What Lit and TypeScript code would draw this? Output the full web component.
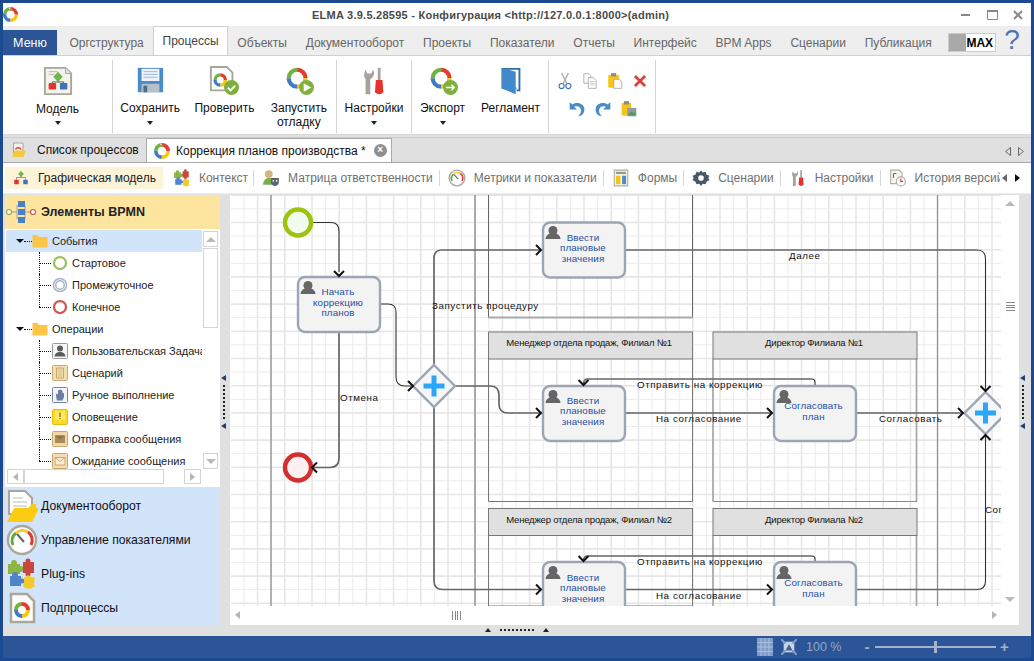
import { LitElement, html, svg, css } from 'lit';
import { customElement } from 'lit/decorators.js';

const RED = '#e53b2e';
const GREEN = '#6fb23f';
const BLUE = '#3f7cc4';
const YELLOW = '#f6c614';

// four coloured arcs, the ELMA ring
const ringArcs = (cx: number, cy: number, r: number, w: number) => svg`
  <g fill="none" stroke-width=${w} transform="rotate(-90 ${cx} ${cy})">
    <circle cx=${cx} cy=${cy} r=${r} pathLength="100" stroke=${RED} stroke-dasharray="25 75"></circle>
    <circle cx=${cx} cy=${cy} r=${r} pathLength="100" stroke=${YELLOW} stroke-dasharray="25 75" stroke-dashoffset="-25"></circle>
    <circle cx=${cx} cy=${cy} r=${r} pathLength="100" stroke=${BLUE} stroke-dasharray="25 75" stroke-dashoffset="-50"></circle>
    <circle cx=${cx} cy=${cy} r=${r} pathLength="100" stroke=${GREEN} stroke-dasharray="25 75" stroke-dashoffset="-75"></circle>
  </g>`;

const icon = (size: number, body: unknown, box = 32) =>
  html`<svg width=${size} height=${size} viewBox="0 0 ${box} ${box}">${body}</svg>`;

const puzzle = svg`
  <g fill="#8db544"><rect x="2" y="6" width="12" height="10"></rect><circle cx="8" cy="5" r="3"></circle><circle cx="15" cy="11" r="3"></circle></g>
  <g fill="#c8473c"><rect x="17" y="4" width="11" height="11"></rect><circle cx="22" cy="3" r="2.500"></circle><circle cx="22" cy="16" r="2.500"></circle></g>
  <g fill="#4f85c8"><rect x="4" y="18" width="11" height="10"></rect><circle cx="9" cy="17" r="3"></circle><circle cx="16" cy="23" r="2.500"></circle></g>
  <path d="M18 20l4-3 3 2 4 1-1 5 1 3-5 3-7-2 1-4z" fill="#f4c92a"></path>`;

const gauge = svg`
  <circle cx="16" cy="16" r="14" fill="#fff" stroke="#aaa69b" stroke-width="2.400"></circle>
  <path d="M7 21A10 10 0 0 1 10 9" fill="none" stroke="#5fa83c" stroke-width="3"></path>
  <path d="M10 9A10 10 0 0 1 22 8" fill="none" stroke="#f4c92a" stroke-width="3"></path>
  <path d="M22 8A10 10 0 0 1 25 21" fill="none" stroke="#dc3a30" stroke-width="3"></path>
  <path d="M11 10L18 18" stroke="#666" stroke-width="2"></path>`;

const flow = svg`
  <path d="M16 10V15M8 19V15H24V19" fill="none" stroke="#555"></path>
  <path d="M16 3L21 9L16 14L11 9Z" fill="#6fb84a"></path>
  <rect x="4" y="19" width="8" height="8" rx="1" fill="#e5332a"></rect>
  <rect x="20" y="19" width="8" height="8" rx="1" fill="#3f74b8"></rect>`;

const ICONS: Record<string, unknown> = {
  model: svg`
    <path d="M2 2H24L30 8V30H2Z" fill="#f4f2ec" stroke="#a8a59c" stroke-width="2"></path>
    <path d="M24 2V8H30" fill="#e4e2da" stroke="#a8a59c"></path>
    <path d="M6 6h10M6 9h6" stroke="#bbb"></path>
    <path d="M16 12V17M10 22V17H22V22" fill="none" stroke="#555"></path>
    <path d="M16 6L21 11.500L16 17L11 11.500Z" fill="#6fb84a"></path>
    <rect x="6" y="18" width="8" height="7" rx="1" fill="#e5332a"></rect>
    <rect x="18" y="18" width="8" height="7" rx="1" fill="#3f74b8"></rect>`,
  save: svg`
    <rect x="3" y="2" width="27" height="26" fill="#4a8cc9"></rect>
    <rect x="7" y="3" width="19" height="13" fill="#eef3f8"></rect>
    <path d="M9 6h15M9 9h15M9 12h15" stroke="#9db8d4"></path>
    <rect x="7" y="19" width="19" height="9" fill="#b9bfc6"></rect><rect x="9" y="21" width="4" height="7" fill="#4d6c8d"></rect>`,
  check: svg`
    <path d="M2 1H19L25 7V26H2Z" fill="#fff" stroke="#a8a59c" stroke-width="2"></path>
    ${ringArcs(12, 15, 5.500, 3.500)}
    <circle cx="24" cy="23" r="8" fill="#7fb03f"></circle>
    <path d="M20 23l3 3 5-5" fill="none" stroke="#fff" stroke-width="2"></path>`,
  run: svg`
    ${ringArcs(14, 13, 9, 4.500)}
    <circle cx="24" cy="23" r="8" fill="#7fb03f"></circle><path d="M21 18.500L29 23L21 27.500Z" fill="#fff"></path>`,
  tools: svg`
    <path d="M7 14V30H12V14C16 12 17 8 15 4L13 8H9L7 4C5 8 5 12 7 14Z" fill="#a7a29a"></path>
    <rect x="20" y="2" width="3" height="13" fill="#a7a29a"></rect>
    <path d="M18 15H25L26 28Q21.500 32 17 28Z" fill="#e5332a"></path>`,
  export: svg`
    ${ringArcs(14, 13, 9, 4.500)}
    <circle cx="24" cy="23" r="8" fill="#7fb03f"></circle><path d="M19 23H28M25 20l3 3-3 3" fill="none" stroke="#fff" stroke-width="1.500"></path>`,
  book: svg`
    <path d="M6 2H26V27H22V24H6Z" fill="#2b6ea8"></path><path d="M8 4H24V25H22V23H8Z" fill="#fff"></path>
    <path d="M6 2L21 6V30L6 24Z" fill="#4189c9"></path>`,
  cut: svg`
    <path d="M10 2L19 20M22 2L13 20" stroke="#a8adb3" stroke-width="2.400"></path>
    <circle cx="10" cy="25" r="4.500" fill="none" stroke="#3f74b8" stroke-width="2"></circle>
    <circle cx="22" cy="25" r="4.500" fill="none" stroke="#3f74b8" stroke-width="2"></circle>`,
  copy: svg`
    <path d="M5 3H14L17 6V20H5Z" fill="#fff" stroke="#a5a5a5" stroke-width="1.500"></path>
    <path d="M13 10H22L27 15V29H13Z" fill="#fff" stroke="#a5a5a5" stroke-width="1.500"></path>
    <path d="M16 17h8M16 20h8M16 23h8" stroke="#a5a5a5"></path>`,
  paste: svg`
    <rect x="4" y="5" width="19" height="23" rx="2" fill="#f6c614"></rect><rect x="9" y="2" width="9" height="6" fill="#8c8c84"></rect>
    <path d="M14 13H24L28 17V29H14Z" fill="#fff" stroke="#a5a5a5" stroke-width="1.500"></path>`,
  del: svg`<path d="M7 7L25 25M25 7L7 25" stroke="#d8433a" stroke-width="5"></path>`,
  undo: svg`
    <path d="M3 4V17H16L11 12C16 10 23 12 23 19C23 23 21 26 18 29C26 28 30 22 29 15C28 7 17 2 8 8Z" fill="#4a8cc9"></path>`,
  redo: svg`
    <path d="M29 4V17H16L21 12C16 10 9 12 9 19C9 23 11 26 14 29C6 28 2 22 3 15C4 7 15 2 24 8Z" fill="#4a8cc9"></path>`,
  pasteSpecial: svg`
    <rect x="3" y="5" width="17" height="23" rx="2" fill="#f6c614"></rect><rect x="7" y="2" width="9" height="6" fill="#8c8c84"></rect>
    <rect x="13" y="14" width="16" height="15" fill="#8f9aa3"></rect><path d="M15 26l5-6 3 3 4-2v6H15z" fill="#4f9a58"></path>`,
  flow: svg`${flow}`,
  puzzle: svg`${puzzle}`,
  mask: svg`
    <circle cx="12" cy="9" r="7" fill="#d4b483"></circle><path d="M2 28C2 19 8 16 12 16C17 16 21 19 21 28Z" fill="#79b04a"></path>
    <path d="M16 16H30V24C30 28 26 30 23 30C20 30 16 28 16 24Z" fill="#5c6570"></path>
    <circle cx="20" cy="21" r="1.500" fill="#fff"></circle><circle cx="26" cy="21" r="1.500" fill="#fff"></circle>`,
  gauge: svg`${gauge}`,
  form: svg`
    <path d="M4 2H28V30H4Z" fill="#f5f3ea" stroke="#b0ad9f" stroke-width="2"></path>
    <rect x="7" y="5" width="18" height="4" fill="#9a9a92"></rect>
    <rect x="7" y="12" width="8" height="15" fill="#f6c614"></rect><rect x="18" y="12" width="7" height="15" fill="#4a8cc9"></rect>`,
  gear: svg`
    <path d="M16 2l3 4 5-1 2 5 5 2-2 4 2 4-5 2-2 5-5-1-3 4-3-4-5 1-2-5-5-2 2-4-2-4 5-2 2-5 5 1z" fill="#47586b"></path>
    <circle cx="16" cy="16" r="5" fill="#fff"></circle>`,
  history: svg`
    <path d="M3 2H18L23 7V26H3Z" fill="#f8f7f2" stroke="#b0ad9f" stroke-width="2"></path>
    <path d="M8 8v8M8 8h5" stroke="#dc3a30" stroke-width="2" fill="none"></path>
    <circle cx="21" cy="22" r="8" fill="#fff" stroke="#aaa" stroke-width="2"></circle>
    <path d="M21 17v5h4" fill="none" stroke="#dc3a30" stroke-width="2"></path>`,
  procList: svg`
    <path d="M5 2H24V22H5Z" fill="#f2f0ea" stroke="#a8a59c" stroke-width="2"></path>
    <path d="M9 15A6 6 0 0 1 20 15" fill="none" stroke="#d8433a" stroke-width="3"></path>
    <path d="M2 30L7 17H30L25 30Z" fill="#f6c83c"></path>`,
  ring: svg`${ringArcs(16, 16, 11, 6.500)}`,
  docFolder: svg`
    <path d="M3 1H19L26 8V24H3Z" fill="#fff" stroke="#aaa69b" stroke-width="2"></path>
    <path d="M7 8h10M7 12h14M7 16h14" stroke="#bbb"></path>
    <path d="M1 32L8 18H22L26 14H30V18H33L26 32Z" fill="#fbcc13"></path>`,
  plugins: svg`${puzzle}`,
  subProc: svg`
    <path d="M5 2H21L28 9V30H5Z" fill="#fff" stroke="#aaa69b" stroke-width="2.500"></path>
    ${ringArcs(16, 18, 6, 4)}`,
  folder: svg`<path d="M1 8V4H11L14 8H31V29H1Z" fill="#fbc644"></path>`,
  evStart: svg`<circle cx="16" cy="16" r="12" fill="#fff" stroke="#9cc066" stroke-width="4.500"></circle>`,
  evMid: svg`<circle cx="16" cy="16" r="13" fill="#fff" stroke="#a9b3c4" stroke-width="3"></circle><circle cx="16" cy="16" r="8.500" fill="#fff" stroke="#a9b3c4" stroke-width="3"></circle>`,
  evEnd: svg`<circle cx="16" cy="16" r="12" fill="#fff" stroke="#cf5650" stroke-width="4.500"></circle>`,
  opUser: svg`<rect x="1" y="1" width="30" height="30" rx="2" fill="#f6f6f6" stroke="#9a9a9a" stroke-width="2"></rect>
    <circle cx="16" cy="11" r="6" fill="#5b5b5b"></circle><path d="M5 27C6 20 11 18 16 18C21 18 26 20 27 27Z" fill="#5b5b5b"></path>`,
  opScript: svg`<rect x="1" y="1" width="30" height="30" rx="2" fill="#f3dfae" stroke="#c9ab75" stroke-width="2"></rect>
    <path d="M9 6H23V26H9Z" fill="none" stroke="#b7955c" stroke-width="1.500"></path><path d="M12 10h8M12 14h8M12 18h8M12 22h8" stroke="#b7955c"></path>`,
  opHand: svg`<rect x="1" y="1" width="30" height="30" rx="2" fill="#f4f4f6" stroke="#7686a5" stroke-width="2"></rect>
    <path d="M10 27C8 20 7 15 9 13L12 15V7L15 6L16 5L19 6L21 8V12L24 12V20L21 27Z" fill="#6b7ea6"></path>`,
  opAlert: svg`<rect x="1" y="1" width="30" height="30" rx="2" fill="#f8dc23" stroke="#e6bd1a" stroke-width="2"></rect>
    <path d="M6 5H26V21H20L15 27V21H6Z" fill="#fbe96b"></path><path d="M16 7V16M16 18V20.500" stroke="#a97d13" stroke-width="3"></path>`,
  opSend: svg`<rect x="1" y="1" width="30" height="30" rx="2" fill="#f0d8a8" stroke="#c9a870" stroke-width="2"></rect>
    <path d="M6 9H26V24H6Z" fill="#a98a5b"></path><path d="M6 9L16 17L26 9" fill="#8f7249"></path>`,
  opWait: svg`<rect x="1" y="1" width="30" height="30" rx="2" fill="#f3deb4" stroke="#c9a870" stroke-width="2"></rect>
    <path d="M6 9H26V24H6Z" fill="#f8ecd0" stroke="#b5965f" stroke-width="1.500"></path><path d="M6 9L16 17L26 9" fill="none" stroke="#b5965f" stroke-width="1.500"></path>`,
};

const MAIN_TABS = ['Оргструктура', 'Процессы', 'Объекты', 'Документооборот', 'Проекты', 'Показатели', 'Отчеты', 'Интерфейс', 'BPM Apps', 'Сценарии', 'Публикация'];

const SUB_TABS = [
  ['flow', 'Графическая модель'],
  ['puzzle', 'Контекст'],
  ['mask', 'Матрица ответственности'],
  ['gauge', 'Метрики и показатели'],
  ['form', 'Формы'],
  ['gear', 'Сценарии'],
  ['tools', 'Настройки'],
  ['history', 'История версий'],
];

const TREE = [
  { name: 'События', items: [['evStart', 'Стартовое'], ['evMid', 'Промежуточное'], ['evEnd', 'Конечное']] },
  { name: 'Операции', items: [['opUser', 'Пользовательская Задача'], ['opScript', 'Сценарий'], ['opHand', 'Ручное выполнение'], ['opAlert', 'Оповещение'], ['opSend', 'Отправка сообщения'], ['opWait', 'Ожидание сообщения']] },
];

const ACCORDION = [
  ['docFolder', 'Документооборот'],
  ['gauge', 'Управление показателями'],
  ['plugins', 'Plug-ins'],
  ['subProc', 'Подпроцессы'],
];

const range = (from: number, to: number, step: number) => {
  const out: number[] = [];
  for (let v = from; v <= to; v += step) out.push(v);
  return out;
};

const person = (x: number, y: number) => svg`
  <circle cx=${x} cy=${y + 4.500} r="4.500" fill="#666"></circle>
  <path d="M${x - 7.500} ${y + 13}C${x - 7} ${y + 8} ${x - 3} ${y + 7} ${x} ${y + 7}C${x + 3} ${y + 7} ${x + 7} ${y + 8} ${x + 7.500} ${y + 13}Z" fill="#666"></path>`;

const task = (x: number, y: number, lines: string[], baselines: number[], cx: number, px: number, py: number) => svg`
  <rect class="task" x=${x} y=${y} width="82" height="55" rx="7"></rect>
  ${person(px, py)}
  ${lines.map((l, i) => svg`<text class="task-text" x=${cx} y=${baselines[i]} text-anchor="middle">${l}</text>`)}`;

const gateway = (x: number, y: number) => svg`
  <path class="gate" d="M${x} ${y - 21}L${x + 21} ${y}L${x} ${y + 21}L${x - 21} ${y}Z"></path>
  <path d="M${x - 10.500} ${y}H${x + 10.500}M${x} ${y - 10.500}V${y + 10.500}" stroke="#2aa7fb" stroke-width="5"></path>`;

const arrow = (x: number, y: number, dir: 'r' | 'l' | 'd' | 'u') => {
  const d = {
    r: `M${x - 5} ${y - 5}L${x} ${y}L${x - 5} ${y + 5}`,
    l: `M${x + 5} ${y - 5}L${x} ${y}L${x + 5} ${y + 5}`,
    d: `M${x - 5} ${y - 5}L${x} ${y}L${x + 5} ${y - 5}`,
    u: `M${x - 5} ${y + 5}L${x} ${y}L${x + 5} ${y + 5}`,
  }[dir];
  return svg`<path class="head" d=${d}></path>`;
};

const label = (x: number, y: number, t: string) => svg`<text class="flow-label" x=${x} y=${y}>${t}</text>`;

@customElement('app-root')
export class AppRoot extends LitElement {
  static styles = css`
    :host {
      display: block;
      width: 1034px;
      height: 661px;
      font-family: 'Liberation Sans', Arial, sans-serif;
      font-size: 12px;
      color: #111;
      overflow: hidden;
    }
    svg { display: block; flex: none; }
    .window {
      box-sizing: border-box;
      width: 1034px;
      height: 661px;
      border: 3px solid #1b4a90;
      background: #e0e0e0;
      display: flex;
      flex-direction: column;
    }
    .title {
      height: 23px;
      background: #fff;
      display: flex;
      align-items: center;
      flex: none;
    }
    .logo { margin-left: -1px; }
    .title-text {
      margin-left: 293px;
      font-size: 11px;
      font-weight: bold;
      letter-spacing: .25px;
      color: #4a4a4a;
      white-space: nowrap;
    }
    .win-btns { margin-left: auto; display: flex; gap: 10px; padding-right: 5px; }

    .tabs {
      height: 30px;
      background: #eee;
      border-bottom: 1px solid #d0d0d0;
      box-sizing: border-box;
      display: flex;
      align-items: flex-end;
      flex: none;
    }
    .menu {
      width: 54px;
      height: 25px;
      background: #2b5597;
      color: #fff;
      font-size: 12.500px;
      display: flex;
      align-items: center;
      justify-content: center;
      margin-right: 3px;
      flex: none;
    }
    .tab {
      height: 25px;
      padding: 0 9.400px;
      color: #666;
      display: flex;
      align-items: center;
      white-space: nowrap;
      flex: none;
    }
    .tab.on {
      height: 29px;
      box-sizing: border-box;
      background: #fff;
      color: #444;
      border: 1px solid #d0d0d0;
      border-bottom: none;
      padding: 0 8.400px;
    }
    .max {
      margin-left: 7px;
      margin-bottom: 3px;
      width: 48px;
      height: 19px;
      box-sizing: border-box;
      border: 1px solid #ccc;
      background: linear-gradient(90deg, #a9a9a9 0 17px, #fff 17px);
      font-size: 12px;
      font-weight: bold;
      color: #000;
      text-align: right;
      padding-right: 2px;
      line-height: 19px;
      flex: none;
    }
    .help {
      margin-left: 5px;
      width: 22px;
      flex: none;
      text-align: center;
      font-size: 28px;
      line-height: 30px;
      color: #4a76b5;
    }

    .ribbon {
      height: 79px;
      background: #fff;
      display: flex;
      flex: none;
      padding-top: 4px;
      box-sizing: border-box;
      border-bottom: 1px solid #d8d8d8;
    }
    .group {
      height: 73px;
      display: flex;
      border-right: 1px solid #d4d4d4;
      box-sizing: border-box;
    }
    .g1 { width: 110px; }
    .g2 { width: 224px; }
    .g3 { width: 75px; }
    .g4 { width: 137px; }
    .g5 { width: 107px; }
    .rb {
      flex: 1;
      display: flex;
      flex-direction: column;
      align-items: center;
      padding-top: 6px;
      line-height: 14px;
      text-align: center;
      color: #111;
      min-width: 0;
    }
    .rb .lbl { margin-top: 5px; }
    .rb .caret {
      width: 0;
      height: 0;
      border: 3.500px solid transparent;
      border-top: 4px solid #222;
      border-bottom: none;
      margin-top: 6px;
    }
    .g1 .lbl { margin-top: 6px; }
    .g1 .rb .caret { margin-top: 5px; }
    .w-export { flex: 0 0 61px; }
    .small-tools {
      padding: 12px 0 0 7px;
      display: flex;
      flex-direction: column;
      gap: 10px;
    }
    .small-row { display: flex; gap: 7px; }
    .small-row.second { padding-left: 12px; gap: 8px; }

    .doc-tabs {
      margin-top: 2px;
      height: 26px;
      background: #e0e0e0;
      border-top: 1px solid #ccc;
      border-bottom: 1px solid #a8a8a8;
      box-sizing: border-box;
      display: flex;
      align-items: flex-end;
      padding-left: 2px;
      flex: none;
    }
    .doc-tab {
      height: 24px;
      display: flex;
      align-items: center;
      gap: 10px;
      padding-left: 6px;
      white-space: nowrap;
      width: 140px;
      box-sizing: border-box;
    }
    .doc-tab.on {
      width: 246px;
      background: #fff;
      border: 1px solid #aaa;
      border-bottom: none;
      gap: 5px;
      margin-left: 1px;
    }
    .close-x {
      margin-left: 3px;
      width: 13px;
      height: 13px;
      border-radius: 50%;
      background: #8f8f8f;
      color: #fff;
      font-size: 10px;
      line-height: 12px;
      text-align: center;
      font-weight: bold;
    }
    .doc-nav { margin-left: auto; display: flex; gap: 7px; padding: 0 7px 6px 0; }

    .sub-tabs {
      height: 31px;
      background: #fff;
      display: flex;
      align-items: center;
      padding-left: 2px;
      flex: none;
      overflow: hidden;
      position: relative;
      border-bottom: 1px solid #eee;
      box-sizing: border-box;
    }
    .sub-tab {
      height: 22px;
      display: flex;
      align-items: center;
      gap: 8px;
      padding: 0 7px 0 8px;
      white-space: nowrap;
      color: #707070;
      flex: none;
      position: relative;
    }
    .sub-tab + .sub-tab::before {
      content: '';
      position: absolute;
      left: -1px;
      top: 3px;
      bottom: 3px;
      width: 1px;
      background: #d8d8d8;
    }
    .sub-tab.on { background: #fdf3d7; color: #222; padding: 0 7px; margin-right: 2px; }
    .sub-tab.on + .sub-tab { padding-right: 6px; }
    .sub-tab.on + .sub-tab::before { display: none; }
    .sub-nav {
      position: absolute;
      right: 0;
      top: 0;
      bottom: 0;
      width: 31px;
      background: #fff;
      display: flex;
      align-items: center;
      gap: 8px;
      padding-left: 2px;
      box-sizing: border-box;
    }

    .main {
      flex: 1;
      min-height: 0;
      display: flex;
      padding: 1px 0 0 2px;
    }
    .left { width: 215px; display: flex; flex-direction: column; flex: none; background: #fff; }
    .panel-head {
      height: 34px;
      background: #fde59f;
      display: flex;
      align-items: center;
      gap: 4px;
      font-size: 12.500px;
      font-weight: bold;
      color: #222;
      flex: none;
    }
    .tree-wrap { display: flex; height: 240px; flex: none; padding: 1px 0 0 1px; box-sizing: border-box; }
    .tree { width: 196px; overflow: hidden; flex: none; font-size: 11px; }
    .row {
      height: 22px;
      display: flex;
      align-items: center;
      white-space: nowrap;
      position: relative;
      color: #222;
    }
    .row.sel { background: #d2e4fa; }
    .row.parent { padding-left: 26px; gap: 4px; }
    .row.child { padding-left: 46px; gap: 4px; }
    .expander {
      position: absolute;
      left: 10px;
      top: 9px;
      width: 0;
      height: 0;
      border: 4px solid transparent;
      border-top: 4px solid #111;
      border-bottom: none;
    }
    .row.parent::before {
      content: '';
      position: absolute;
      left: 18px;
      width: 8px;
      top: 11px;
      border-top: 1px dotted #111;
    }
    .row.child::before {
      content: '';
      position: absolute;
      left: 33px;
      width: 12px;
      top: 11px;
      border-top: 1px dotted #111;
    }
    .row.child::after {
      content: '';
      position: absolute;
      left: 33px;
      top: 0;
      bottom: 0;
      border-left: 1px dotted #111;
    }
    .row.child.last::after { bottom: 11px; }
    .vscroll { width: 16px; margin: 1px 0 0 1px; display: flex; flex-direction: column; gap: 1px; flex: none; }
    .sb-btn {
      box-sizing: border-box;
      border: 1px solid #d4d4d4;
      background: #fff;
      display: flex;
      align-items: center;
      justify-content: center;
      flex: none;
    }
    .sb-btn.v { width: 15px; height: 16px; }
    .sb-btn.h { width: 17px; height: 15px; }
    .sb-track { box-sizing: border-box; border: 1px solid #d4d4d4; background: #fff; }
    .tree-track { width: 15px; height: 80px; }
    .vspacer { flex: 1; }
    .hscroll { height: 18px; display: flex; padding: 0 0 0 2px; flex: none; background: #fff; align-items: flex-start; }
    .h-track { width: 140px; height: 15px; }
    .h-gap { width: 20px; }
    .accordion { flex: 1; background: #d2e4fa; padding-top: 2px; font-size: 12.200px; }
    .acc-row { height: 34px; display: flex; align-items: center; color: #111; padding-left: 1px; gap: 3px; }

    .splitter {
      width: 10px;
      flex: none;
      display: flex;
      flex-direction: column;
      align-items: flex-start;
      padding: 180px 0 0 1px;
      box-sizing: border-box;
      gap: 4px;
    }
    .tri-l {
      width: 0;
      height: 0;
      border: 3px solid transparent;
      border-right: 5px solid #1d3f7a;
      border-left: none;
    }
    .dots-v { margin-left: 2px; height: 34px; border-left: 2px dotted #222; }
    .canvas {
      flex: none;
      width: 789px;
      background: #fff;
      display: flex;
      flex-direction: column;
    }
    .canvas-top { display: flex; height: 411px; flex: none; }
    .canvas-vs { width: 18px; flex: none; display: flex; flex-direction: column; align-items: center; padding: 6px 0 4px; box-sizing: border-box; }
    .grip-h { margin: 96px 0 0; width: 9px; height: 7px; border-top: 1px solid #888; border-bottom: 1px solid #888; position: relative; }
    .grip-h::before { content: ''; position: absolute; left: 0; right: 0; top: 2px; height: 1px; background: #888; box-shadow: 0 2px 0 #888; }
    .canvas-hs { height: 18px; display: flex; align-items: center; padding-left: 5px; }
    .grip-v { margin-left: 212px; width: 7px; height: 9px; border-left: 1px solid #888; border-right: 1px solid #888; position: relative; }
    .grip-v::before { content: ''; position: absolute; top: 0; bottom: 0; left: 2px; width: 1px; background: #888; box-shadow: 2px 0 0 #888; }
    .tri-gray-r, .tri-gray-l { width: 0; height: 0; border: 4px solid transparent; }
    .tri-gray-r { border-left: 5px solid #b5b5b5; border-right: none; }
    .tri-gray-l { border-right: 5px solid #b5b5b5; border-left: none; }
    .tri-gray-u, .tri-gray-d { width: 0; height: 0; border: 5px solid transparent; }
    .tri-gray-u { border-bottom: 5px solid #b9b9b9; border-top: none; }
    .tri-gray-d { border-top: 5px solid #b9b9b9; border-bottom: none; }
    .tri-dark-l, .tri-dark-r { width: 0; height: 0; border: 4px solid transparent; }
    .tri-dark-l { border-right: 5px solid #666; border-left: none; }
    .tri-dark-r { border-left: 5px solid #111; border-right: none; }
    .canvas-right-arrow { margin-left: auto; margin-right: 22px; }
    .mt-auto { margin-top: auto; }

    .split-h {
      height: 10px;
      flex: none;
      display: flex;
      align-items: center;
      gap: 9px;
      padding-left: 482px;
    }
    .tri-u { width: 0; height: 0; border: 3.500px solid transparent; border-bottom: 4px solid #222; border-top: none; }
    .dots-h { width: 34px; border-top: 2px dotted #222; }
    .status {
      margin-top: 1px;
      height: 22px;
      background: #2b5597;
      display: flex;
      align-items: center;
      flex: none;
      padding-left: 754px;
      color: #93a7c8;
      font-size: 12.500px;
    }
    .fit-icon { margin-left: 8px; }
    .zoom-pct { margin-left: 9px; width: 57px; white-space: nowrap; }
    .slider { width: 121px; height: 2px; background: #a5b3ca; position: relative; margin: 0 4px 0 4px; }
    .slider::after { content: ''; position: absolute; left: 59px; top: -5px; width: 3px; height: 12px; background: #a5b3ca; }
    .pm { font-weight: bold; font-size: 15px; width: 8px; line-height: 14px; color: #a5b3ca; text-align: center; }

    .grid-minor { stroke: #ececec; stroke-width: 1; }
    .grid-major { stroke: #e6e6e6; stroke-width: 1.600; }
    .task { fill: #f3f3f3; stroke: #9ba5b4; stroke-width: 2.400; }
    .gate { fill: #f5f6f7; stroke: #9ba5b4; stroke-width: 2.400; }
    .task-text { font: 9.800px 'Liberation Sans', Arial, sans-serif; fill: #2450a4; letter-spacing: .1px; }
    .flow-label { font: 9.800px 'Liberation Sans', Arial, sans-serif; fill: #111; letter-spacing: .55px; }
    .lane-title { font: 9.500px 'Liberation Sans', Arial, sans-serif; fill: #111; letter-spacing: -.2px; }
    .thick { fill: none; stroke: #666; stroke-width: 1.700; }
    .thin { fill: none; stroke: #333; stroke-width: 1.100; }
    .head { fill: none; stroke: #111; stroke-width: 2; }
  `;

  renderDiagram() {
    const vs = range(244, 1002, 13.6);
    const hs = range(195 + 0.3, 606 + 195, 13.6);
    return html`<svg width="771" height="411" viewBox="230 195 771 411">
      ${vs.map((x, i) => svg`<line class=${i % 2 ? 'grid-major' : 'grid-minor'} x1=${x} x2=${x} y1="195" y2="606"></line>`)}
      ${hs.map((y, i) => svg`<line class=${i % 2 === 0 ? 'grid-major' : 'grid-minor'} x1="231" x2="1002" y1=${y} y2=${y}></line>`)}

      <path d="M271 195V606" stroke="#999" stroke-width="1.500"></path>
      <path d="M475 195V606" stroke="#aaa" stroke-width="2"></path>
      <path d="M937.500 195V606" stroke="#8f8f8f" stroke-width="1.200"></path>

      <!-- swimlanes -->
      <path d="M488.500 195V317.500" stroke="#666" fill="none"></path>
      <path d="M692.500 195V317.500" stroke="#666" fill="none"></path>
      <path d="M488 317.500H693" stroke="#aaa" stroke-width="2"></path>
      ${[332, 508.500].map((y, i) => svg`
        <path d="M488.500 ${y + 27}V${i ? 606 : 501.500}H692.500V${y + 27}" fill="none" stroke="#777"></path>
        <path d="M713 ${y + 27}V${i ? 606 : 501.500}M916.500 ${y + 27}V${i ? 606 : 501.500}" stroke="#aaa" stroke-width="1.800"></path>
        ${i ? svg`` : svg`<path d="M713 501.500H917" stroke="#888"></path>`}
        <rect x="488.500" y=${y} width="204" height="27" fill="#e0e0e0" stroke="#777"></rect>
        <rect x="713" y=${y} width="204" height="27" fill="#e0e0e0" stroke="#777"></rect>
        <text class="lane-title" x="589" y=${y + 14} text-anchor="middle">Менеджер отдела продаж, Филиал №${i + 1}</text>
        <text class="lane-title" x="814" y=${y + 14} text-anchor="middle">Директор Филиала №${i + 1}</text>
      `)}

      <!-- flows -->
      <path class="thin" d="M311 222.500H331Q339 222.500 339 231V272"></path>
      <path class="thin" d="M380 304H388Q396 304 396 312V377Q396 386 405 386H411"></path>
      <path class="thick" d="M339 332V458Q339 467.500 330 467.500H312"></path>
      <path class="thick" d="M434 364V258Q434 250 442 250H540"></path>
      <path class="thick" d="M434 407V581Q434 589.500 443 589.500H540"></path>
      <path class="thick" d="M455 386H490Q499 386 499 395V404Q499 413 508 413H540"></path>
      <path class="thick" d="M625 413H771"></path>
      <path class="thin" d="M815 385V382Q815 379 812 379"></path>
      <path class="thick" d="M812 379H588Q583.500 379 583.500 384"></path>
      <path class="thick" d="M856 413H962"></path>
      <path class="thick" d="M625 250H977"></path>
      <path class="thin" d="M977 250Q985.500 250 985.500 259V390"></path>
      <path class="thick" d="M625 589.500H771"></path>
      <path class="thick" d="M856 589.500H977"></path>
      <path class="thin" d="M977 589.500Q985.500 589.500 985.500 581V436"></path>
      <path class="thin" d="M815 562V559Q815 556 812 556"></path>
      <path class="thick" d="M812 556H588Q583.500 556 583.500 561"></path>

      <circle cx="298" cy="222.500" r="13" fill="#f1fbee" stroke="#9dc30f" stroke-width="4.500"></circle>
      <circle cx="298" cy="467.500" r="13" fill="#fdf1f1" stroke="#d42f2f" stroke-width="4.500"></circle>

      ${task(298, 277, ['Начать', 'коррекцию', 'планов'], [295, 306, 316], 338, 308, 281)}
      ${task(543, 222.500, ['Ввести', 'плановые', 'значения'], [241, 251, 262], 583, 553, 226)}
      ${task(543, 386, ['Ввести', 'плановые', 'значения'], [404, 414, 425], 583, 553, 390)}
      ${task(774, 386, ['Согласовать', 'план'], [409, 420], 813.500, 784, 390)}
      ${task(543, 562, ['Ввести', 'плановые', 'значения'], [581, 591, 602], 583, 553, 566)}
      ${task(774, 562, ['Согласовать', 'план'], [586, 597], 813.500, 784, 566)}

      ${gateway(434, 386)}
      ${gateway(985.500, 413)}

      ${arrow(339, 276, 'd')}
      ${arrow(413, 386, 'r')}
      ${arrow(312, 467.500, 'l')}
      ${arrow(541, 250, 'r')}
      ${arrow(541, 413, 'r')}
      ${arrow(541, 589.500, 'r')}
      ${arrow(772, 413, 'r')}
      ${arrow(772, 589.500, 'r')}
      ${arrow(963, 413, 'r')}
      ${arrow(583.500, 385, 'd')}
      ${arrow(583.500, 561, 'd')}
      ${arrow(985.500, 391, 'd')}
      ${arrow(985.500, 435, 'u')}

      ${label(340, 401, 'Отмена')}
      ${label(432, 309, 'Запустить процедуру')}
      ${label(789, 259, 'Далее')}
      ${label(637, 388, 'Отправить на коррекцию')}
      ${label(656, 422, 'На согласование')}
      ${label(879, 422, 'Согласовать')}
      ${label(637, 565, 'Отправить на коррекцию')}
      ${label(656, 599, 'На согласование')}
      ${label(985, 513, 'Согласовать')}
    </svg>`;
  }

  renderRibbonBtn(ic: string, text: string[], caret = false, cls = '') {
    return html`<div class="rb ${cls}">
      ${icon(30, ICONS[ic])}
      <div class="lbl">${text.map((t) => html`<div>${t}</div>`)}</div>
      ${caret ? html`<div class="caret"></div>` : ''}
    </div>`;
  }

  render() {
    return html`<div class="window">
      <div class="title">
        <div class="logo">${icon(17, ICONS.ring)}</div>
        <div class="title-text">ELMA 3.9.5.28595 - Конфигурация &lt;http://127.0.0.1:8000&gt;(admin)</div>
        <div class="win-btns">
          <svg width="16" height="12" viewBox="0 0 16 12"><path d="M3 6H12" stroke="#888" stroke-width="2"></path></svg>
          <svg width="16" height="12" viewBox="0 0 16 12"><path d="M3.500 1.500H13.500V10.500H3.500Z" fill="none" stroke="#888"></path><path d="M3 2H14" stroke="#888" stroke-width="2"></path></svg>
          <svg width="16" height="12" viewBox="0 0 16 12"><path d="M4 2L12 10M12 2L4 10" stroke="#888" stroke-width="2"></path></svg>
        </div>
      </div>

      <div class="tabs">
        <div class="menu">Меню</div>
        ${MAIN_TABS.map((t, i) => html`<div class="tab ${i === 1 ? 'on' : ''}">${t}</div>`)}
        <div class="max">MAX</div>
        <div class="help">?</div>
      </div>

      <div class="ribbon">
        <div class="group g1">${this.renderRibbonBtn('model', ['Модель'], true)}</div>
        <div class="group g2">
          ${this.renderRibbonBtn('save', ['Сохранить'], true)}
          ${this.renderRibbonBtn('check', ['Проверить'])}
          ${this.renderRibbonBtn('run', ['Запустить', 'отладку'])}
        </div>
        <div class="group g3">${this.renderRibbonBtn('tools', ['Настройки'], true)}</div>
        <div class="group g4">
          ${this.renderRibbonBtn('export', ['Экспорт'], true, 'w-export')}
          ${this.renderRibbonBtn('book', ['Регламент'])}
        </div>
        <div class="group g5">
          <div class="small-tools">
            <div class="small-row">${['cut', 'copy', 'paste', 'del'].map((k) => icon(18, ICONS[k]))}</div>
            <div class="small-row second">${['undo', 'redo', 'pasteSpecial'].map((k) => icon(18, ICONS[k]))}</div>
          </div>
        </div>
      </div>

      <div class="doc-tabs">
        <div class="doc-tab">${icon(16, ICONS.procList)}<span>Список процессов</span></div>
        <div class="doc-tab on">${icon(18, ICONS.ring)}<span>Коррекция планов производства *</span><div class="close-x">×</div></div>
        <div class="doc-nav">
          <svg width="6" height="9" viewBox="0 0 6 9"><path d="M5.500 .5V8.500L.5 4.500Z" fill="none" stroke="#666"></path></svg>
          <svg width="6" height="9" viewBox="0 0 6 9"><path d="M.5 .5V8.500L5.500 4.500Z" fill="none" stroke="#666"></path></svg>
        </div>
      </div>

      <div class="sub-tabs">
        ${SUB_TABS.map(([k, t], i) => html`<div class="sub-tab ${i === 0 ? 'on' : ''}">${icon(18, ICONS[k])}<span>${t}</span></div>`)}
        <div class="sub-nav"><div class="tri-dark-l"></div><div class="tri-dark-r"></div></div>
      </div>

      <div class="main">
        <div class="left">
          <div class="panel-head">
            <svg width="32" height="24" viewBox="0 0 32 24">
              <path d="M6 12H12M12 5V19M20 5V19M20 12H26" stroke="#a0a0a0" fill="none"></path>
              <circle cx="4" cy="12" r="2.500" fill="#fff" stroke="#8ab04c" stroke-width="1.200"></circle>
              <circle cx="28" cy="12" r="2.500" fill="#fff" stroke="#cf5650" stroke-width="1.200"></circle>
              <rect x="13" y="1" width="7" height="6" fill="#4a80c4"></rect>
              <rect x="13" y="9" width="7" height="6" fill="#4a80c4"></rect>
              <rect x="13" y="17" width="7" height="6" fill="#4a80c4"></rect>
            </svg>
            <span>Элементы BPMN</span>
          </div>
          <div class="tree-wrap">
            <div class="tree">
              ${TREE.map((g, gi) => html`
                <div class="row parent ${gi === 0 ? 'sel' : ''}"><div class="expander"></div>${icon(16, ICONS.folder)}<span>${g.name}</span></div>
                ${g.items.map(([k, t], i) => html`<div class="row child ${i === g.items.length - 1 ? 'last' : ''}">${icon(16, ICONS[k])}<span>${t}</span></div>`)}
              `)}
            </div>
            <div class="vscroll">
              <div class="sb-btn v"><div class="tri-gray-u"></div></div>
              <div class="sb-track tree-track"></div>
              <div class="vspacer"></div>
              <div class="sb-btn v"><div class="tri-gray-d"></div></div>
            </div>
          </div>
          <div class="hscroll">
            <div class="sb-btn h"><div class="tri-gray-l"></div></div>
            <div class="sb-track h-track"></div>
            <div class="h-gap"></div>
            <div class="sb-btn h"><div class="tri-gray-r"></div></div>
          </div>
          <div class="accordion">
            ${ACCORDION.map(([k, t]) => html`<div class="acc-row">${icon(32, ICONS[k])}<span>${t}</span></div>`)}
          </div>
        </div>

        <div class="splitter"><div class="tri-l"></div><div class="dots-v"></div><div class="tri-l"></div></div>

        <div class="canvas">
          <div class="canvas-top">
            ${this.renderDiagram()}
            <div class="canvas-vs">
              <div class="tri-gray-u"></div>
              <div class="grip-h"></div>
              <div class="tri-gray-d mt-auto"></div>
            </div>
          </div>
          <div class="canvas-hs">
            <div class="tri-gray-l"></div>
            <div class="grip-v"></div>
            <div class="tri-gray-r canvas-right-arrow"></div>
          </div>
        </div>

        <div class="splitter"><div class="tri-l"></div><div class="dots-v"></div><div class="tri-l"></div></div>
      </div>

      <div class="split-h"><div class="tri-u"></div><div class="dots-h"></div><div class="tri-u"></div></div>

      <div class="status">
        <svg width="16" height="18" viewBox="0 0 16 18">
          <rect width="16" height="18" fill="#7f9cc9"></rect>
          <path d="M4 0V18M8 0V18M12 0V18M0 4.500H16M0 9H16M0 13.500H16" stroke="#a9bddd"></path>
        </svg>
        <svg class="fit-icon" width="16" height="16" viewBox="0 0 18 18">
          <rect x="3" y="3" width="12" height="12" fill="#c8d4e6"></rect>
          <path d="M0 0L5 5M18 0L13 5M0 18L5 13M18 18L13 13" stroke="#7f9cc9" stroke-width="2.500"></path>
          <path d="M5 13L9 6L13 13Z" fill="#3c63a0"></path>
        </svg>
        <span class="zoom-pct">100 %</span>
        <span class="pm">-</span>
        <div class="slider"></div>
        <span class="pm">+</span>
      </div>
    </div>`;
  }
}
